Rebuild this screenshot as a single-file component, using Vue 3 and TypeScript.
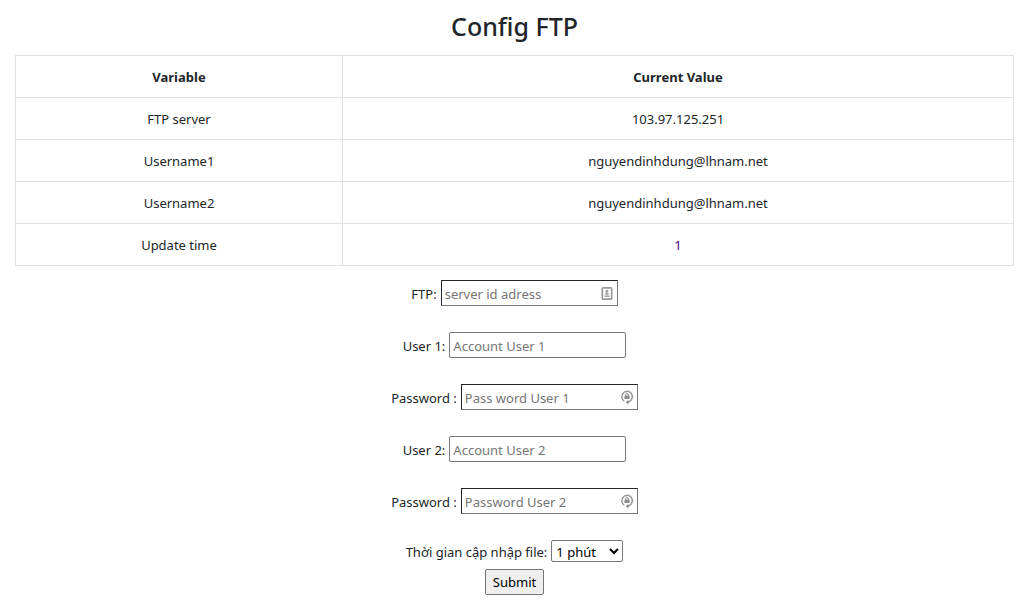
<script setup lang="ts">
interface Row { name: string; value: string; accent?: boolean }
interface Field { id: string; label: string; placeholder: string; type: string; icon?: 'card' | 'lock' }

const rows: Row[] = [
  { name: 'FTP server', value: '103.97.125.251' },
  { name: 'Username1', value: 'nguyendinhdung@lhnam.net' },
  { name: 'Username2', value: 'nguyendinhdung@lhnam.net' },
  { name: 'Update time', value: '1', accent: true },
]

const fields: Field[] = [
  { id: 'ftp', label: 'FTP:', placeholder: 'server id adress', type: 'text', icon: 'card' },
  { id: 'user1', label: 'User 1:', placeholder: 'Account User 1', type: 'text' },
  { id: 'pass1', label: 'Password :', placeholder: 'Pass word User 1', type: 'password', icon: 'lock' },
  { id: 'user2', label: 'User 2:', placeholder: 'Account User 2', type: 'text' },
  { id: 'pass2', label: 'Password :', placeholder: 'Password User 2', type: 'password', icon: 'lock' },
]
</script>

<template>
  <main class="page">
    <h1>Config FTP</h1>
    <table>
      <thead>
        <tr><th class="name">Variable</th><th>Current Value</th></tr>
      </thead>
      <tbody>
        <tr v-for="row in rows" :key="row.name">
          <td>{{ row.name }}</td>
          <td :class="{ accent: row.accent }">{{ row.value }}</td>
        </tr>
      </tbody>
    </table>
    <form @submit.prevent>
      <div v-for="f in fields" :key="f.id" class="field">
        <label :for="f.id">{{ f.label }}</label>
        <span class="box" :class="{ filled: f.icon }">
          <input :id="f.id" :type="f.type" :placeholder="f.placeholder">
          <svg v-if="f.icon === 'card'" viewBox="0 0 16 16" aria-hidden="true">
            <rect x="3.3" y="2.8" width="9.4" height="11.4" rx="1" fill="none" stroke="#999" stroke-width="1.7" />
            <circle cx="8" cy="6.300" r="1.300" fill="#8c8c8c" />
            <path d="M6 9.600q0-1.800 2-1.800t2 1.800zM5.500 10.600h5v1.200h-5z" fill="#8c8c8c" />
          </svg>
          <svg v-if="f.icon === 'lock'" viewBox="0 0 16 16" aria-hidden="true">
            <path d="M5.200 12.100A5.300 5.300 0 1 1 12.200 11Q11 12.700 8.800 13" fill="none" stroke="#999" stroke-width="1.500" />
            <path d="M9.500 10.900v4.700L6.500 13.200z" fill="#8c8c8c" />
            <path d="M6.600 7V6a1.400 1.400 0 0 1 2.800 0v1" fill="none" stroke="#8c8c8c" />
            <rect x="5.500" y="6.700" width="5" height="3.300" fill="#8c8c8c" />
          </svg>
        </span>
      </div>
      <div class="interval">
        <label for="interval">Thời gian cập nhập file:</label>
        <select id="interval"><option>1 phút</option></select>
      </div>
      <button type="submit">Submit</button>
    </form>
  </main>
</template>

<style>
body {
  margin: 0;
  background: #fff;
}
</style>

<style scoped>
.page {
  padding: 11px 15px 0;
  color: #212529;
  font-family: "Noto Sans", "Open Sans", sans-serif;
  font-size: 13px;
  line-height: 18px;
  text-align: center;
}
h1 {
  margin: 0 0 14px;
  font-size: 25px;
  font-weight: 500;
  line-height: 30px;
}
table {
  width: 100%;
  border-collapse: collapse;
}
th, td {
  padding: 13px 12px 11px;
  height: 17px;
  line-height: 17px;
  border: 1px solid #dee2e6;
}
th { font-weight: 700; }
.name { width: 302px; }
.accent { color: #4b0082; }
form {
  display: flex;
  flex-direction: column;
  align-items: center;
  padding-top: 14px;
}
.field {
  display: flex;
  align-items: center;
  gap: 4px;
  margin-bottom: 26px;
}
label { padding-top: 2px; }
.box {
  display: flex;
  position: relative;
}
input {
  box-sizing: border-box;
  width: 177px;
  height: 26px;
  padding: 2px 3px 0;
  border: 1px solid #767676;
  border-radius: 2px;
  font: inherit;
  color: inherit;
  background: #fff;
}
.filled input {
  border-color: #212529 #767676 #767676 #212529;
  border-radius: 0;
}
input::placeholder { color: #757575; opacity: 1; }
.box svg {
  position: absolute;
  top: 5px;
  right: 3px;
  width: 16px;
  height: 16px;
}
.interval {
  display: flex;
  align-items: center;
  gap: 4px;
}
select {
  box-sizing: border-box;
  width: 72px;
  height: 22px;
  padding: 1px 0 0;
  border: 1px solid #767676;
  border-radius: 2px;
  background: #fff;
  color: #000;
  font: inherit;
}
button {
  box-sizing: border-box;
  height: 26px;
  margin-top: 7px;
  padding: 1px 7px;
  border: 1px solid #767676;
  border-radius: 2px;
  background: #efefef;
  color: #000;
  font: inherit;
}
</style>
